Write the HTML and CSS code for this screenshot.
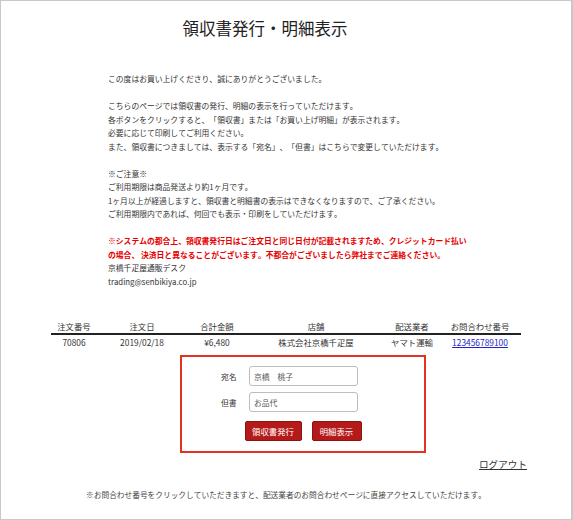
FILE: index.html
```html
<!DOCTYPE html>
<html lang="ja">
<head>
<meta charset="utf-8">
<title>領収書発行・明細表示</title>
<link rel="stylesheet" href="styles.css">
</head>
<body>
<div class="frame">
  <h1 class="title">領収書発行・明細表示</h1>
  <div class="intro">
    <p>この度はお買い上げくださり、誠にありがとうございました。</p>
    <p>こちらのページでは領収書の発行、明細の表示を行っていただけます。<br>各ボタンをクリックすると、「領収書」または「お買い上げ明細」が表示されます。<br>必要に応じて印刷してご利用ください。<br>また、領収書につきましては、表示する「宛名」、「但書」はこちらで変更していただけます。</p>
    <p>※ご注意※<br>ご利用期限は商品発送より約1ヶ月です。<br>1ヶ月以上が経過しますと、領収書と明細書の表示はできなくなりますので、ご了承ください。<br>ご利用期限内であれば、何回でも表示・印刷をしていただけます。</p>
    <p><strong class="alert">※システムの都合上、領収書発行日はご注文日と同じ日付が記載されますため、クレジットカード払い<br>の場合、 決済日と異なることがございます。不都合がございましたら弊社までご連絡ください。</strong><br>京橋千疋屋通販デスク<br>trading@senbikiya.co.jp</p>
  </div>

  <div class="orders">
    <div class="cell head">注文番号</div>
    <div class="cell head">注文日</div>
    <div class="cell head">合計金額</div>
    <div class="cell head">店舗</div>
    <div class="cell head">配送業者</div>
    <div class="cell head">お問合わせ番号</div>
    <div class="cell">70806</div>
    <div class="cell">2019/02/18</div>
    <div class="cell">¥6,480</div>
    <div class="cell">株式会社京橋千疋屋</div>
    <div class="cell">ヤマト運輸</div>
    <div class="cell"><a class="track" href="#">123456789100</a></div>
  </div>

  <div class="form-box">
    <div class="field">
      <label class="label" for="atena">宛名</label>
      <input class="input" id="atena" type="text" value="京橋　桃子">
    </div>
    <div class="field">
      <label class="label" for="tadashi">但書</label>
      <input class="input" id="tadashi" type="text" value="お品代">
    </div>
    <div class="buttons">
      <button class="btn btn-receipt" type="button">領収書発行</button>
      <button class="btn btn-detail" type="button">明細表示</button>
    </div>
  </div>

  <div class="logout-row"><a class="logout" href="#">ログアウト</a></div>

  <p class="note">※お問合わせ番号をクリックしていただきますと、配送業者のお問合わせページに直接アクセスしていただけます。</p>
</div>
</body>
</html>
```

FILE: styles.css
```css
html, body {
  margin: 0;
  padding: 0;
  background: #fff;
}

body {
  font-family: "Noto Sans CJK JP", "Noto Sans", sans-serif;
  color: #333;
  text-spacing-trim: space-all;
  font-kerning: none;
}

.frame {
  box-sizing: border-box;
  width: 573px;
  height: 520px;
  border-style: solid;
  border-color: #c8c8c8;
  border-width: 1px 2px 1px 1px;
  overflow: hidden;
}

.title {
  margin: 17px 0 0;
  padding-right: 42px;
  font-size: 16.5px;
  line-height: 20px;
  font-weight: normal;
  color: #222;
  text-align: center;
}

.intro {
  margin: 34.25px 0 0 107px;
  font-size: 7.8px;
  line-height: 13.5px;
  white-space: nowrap;
  color: #333;
}

.intro p {
  margin: 0 0 13.5px;
}

.intro p:last-child {
  margin-bottom: 0;
}

.alert {
  color: #e60000;
  font-weight: bold;
}

.orders {
  display: grid;
  grid-template-columns: 46px 90px 60px 138px 54px 82px;
  width: 470px;
  margin: 31.25px 0 0 50px;
  font-size: 8.4px;
  line-height: 13px;
  color: #333;
}

.cell {
  text-align: center;
  white-space: nowrap;
  padding-top: 1px;
}

.cell.head {
  padding-top: 0;
  border-bottom: 2px solid #222;
}

.track {
  color: #2323c8;
  text-decoration: underline;
}

.form-box {
  box-sizing: border-box;
  width: 246px;
  height: 98px;
  margin: 6.5px 0 0 179px;
  border: 2px solid #e5321c;
  padding: 9px 0 0;
}

.field {
  display: flex;
  align-items: center;
  height: 20px;
  margin: 0 0 6px 39px;
  gap: 12px;
}

.label {
  width: 16px;
  font-size: 7.8px;
  color: #333;
  white-space: nowrap;
}

.input {
  box-sizing: border-box;
  width: 109px;
  height: 20px;
  margin: 0;
  padding: 0 4px;
  border: 1px solid #bdbdbd;
  border-radius: 3px;
  font-family: "Noto Sans CJK JP", "Noto Sans", sans-serif;
  font-size: 7.8px;
  color: #555;
  background: #fff;
  outline: none;
}

.buttons {
  display: flex;
  justify-content: center;
  gap: 10px;
  margin-top: 9px;
}

.btn {
  box-sizing: border-box;
  height: 20px;
  margin: 0;
  padding: 0;
  border: 1px solid #8e1212;
  border-radius: 2px;
  background: #b51a1b;
  color: #fff;
  font-family: "Noto Sans CJK JP", "Noto Sans", sans-serif;
  font-size: 8.4px;
  line-height: 18px;
  white-space: nowrap;
}

.btn-receipt {
  width: 57px;
}

.btn-detail {
  width: 50px;
}

.logout-row {
  width: 526px;
  margin-top: 2px;
  text-align: right;
  line-height: 12px;
}

.logout {
  font-size: 9.6px;
  color: #333;
  text-decoration: underline;
}

.note {
  margin: 19px 0 0;
  font-size: 7.7px;
  line-height: 12px;
  color: #444;
  text-align: center;
  white-space: nowrap;
}
```
